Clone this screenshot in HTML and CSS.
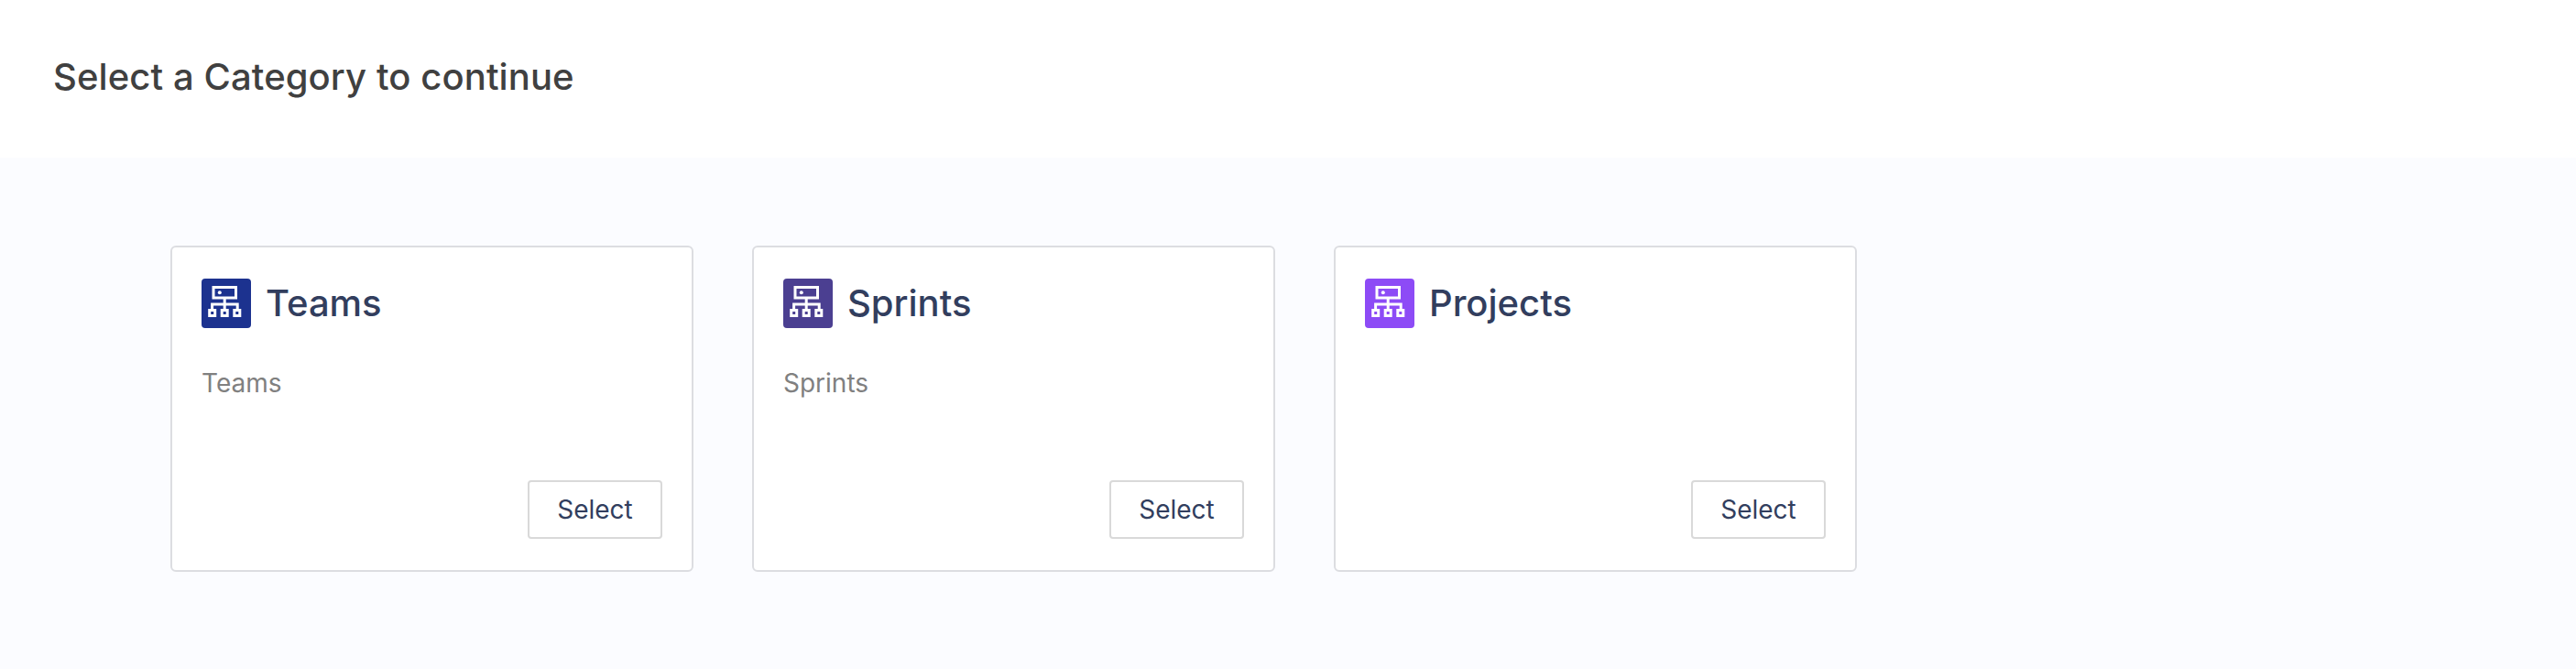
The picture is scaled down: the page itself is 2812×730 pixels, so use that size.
FILE: index.html
```html
<!DOCTYPE html>
<html lang="en">
<head>
<meta charset="utf-8">
<title>Select a Category</title>
<link rel="stylesheet" href="styles.css">
</head>
<body>
<svg class="sprite" aria-hidden="true">
  <symbol id="hierarchy" viewBox="0 0 54 54">
    <g fill="none" stroke="#fff" stroke-width="3">
      <rect x="13" y="9.5" width="24.5" height="11.5"/>
      <path d="M25.2 21v13.5M11.6 34v-6h27.6v6"/>
      <rect x="8.7" y="34.5" width="6" height="6"/>
      <rect x="22.2" y="34.5" width="6" height="6"/>
      <rect x="35.8" y="34.5" width="6" height="6"/>
    </g>
    <circle cx="19.8" cy="15.3" r="2" fill="#fff"/>
  </symbol>
</svg>
<header class="header">
  <h1 class="heading">Select a Category to continue</h1>
</header>
<main class="cards">
  <article class="card">
    <div class="card-head">
      <svg class="icon icon-teams"><use href="#hierarchy"/></svg>
      <h2 class="title">Teams</h2>
    </div>
    <p class="description">Teams</p>
    <button class="select">Select</button>
  </article>
  <article class="card">
    <div class="card-head">
      <svg class="icon icon-sprints"><use href="#hierarchy"/></svg>
      <h2 class="title">Sprints</h2>
    </div>
    <p class="description">Sprints</p>
    <button class="select">Select</button>
  </article>
  <article class="card">
    <div class="card-head">
      <svg class="icon icon-projects"><use href="#hierarchy"/></svg>
      <h2 class="title">Projects</h2>
    </div>
    <button class="select">Select</button>
  </article>
</main>
</body>
</html>
```

FILE: styles.css
```css
* {
  box-sizing: border-box;
}

body {
  margin: 0;
  min-height: 730px;
  display: flex;
  flex-direction: column;
  background: #fff;
  font-family: Inter, "Liberation Sans", sans-serif;
}

.sprite {
  display: none;
}

.header {
  height: 172px;
  padding: 60px 58px 0;
}

.heading {
  margin: 0;
  font-size: 40px;
  font-weight: 500;
  line-height: 48px;
  letter-spacing: 0.1px;
  color: #404040;
}

.cards {
  flex: 1;
  display: flex;
  align-items: flex-start;
  gap: 64px;
  padding: 96px 186px 0;
  background: #fbfcff;
}

.card {
  display: flex;
  flex-direction: column;
  width: 571px;
  height: 356px;
  padding: 34px 32px;
  background: #fff;
  border: 2px solid #dcdde1;
  border-radius: 6px;
}

.card-head {
  display: flex;
  align-items: center;
  gap: 16px;
}

.icon {
  width: 54px;
  height: 54px;
  border-radius: 4px;
}

.icon-teams {
  background: #1c328f;
}

.icon-sprints {
  background: #4b3f91;
}

.icon-projects {
  background: #8d4bf6;
}

.title {
  margin: 0;
  font-size: 40px;
  font-weight: 500;
  line-height: 48px;
  color: #323e5e;
}

.description {
  margin: 43px 0 0;
  font-size: 28px;
  line-height: 34px;
  color: #808080;
}

.select {
  width: 147px;
  height: 64px;
  margin: auto 0 0 auto;
  padding: 0;
  background: #fff;
  border: 2px solid #d9d9d9;
  border-radius: 4px;
  font: 400 28px/34px Inter, "Liberation Sans", sans-serif;
  color: #323e5e;
}
```
